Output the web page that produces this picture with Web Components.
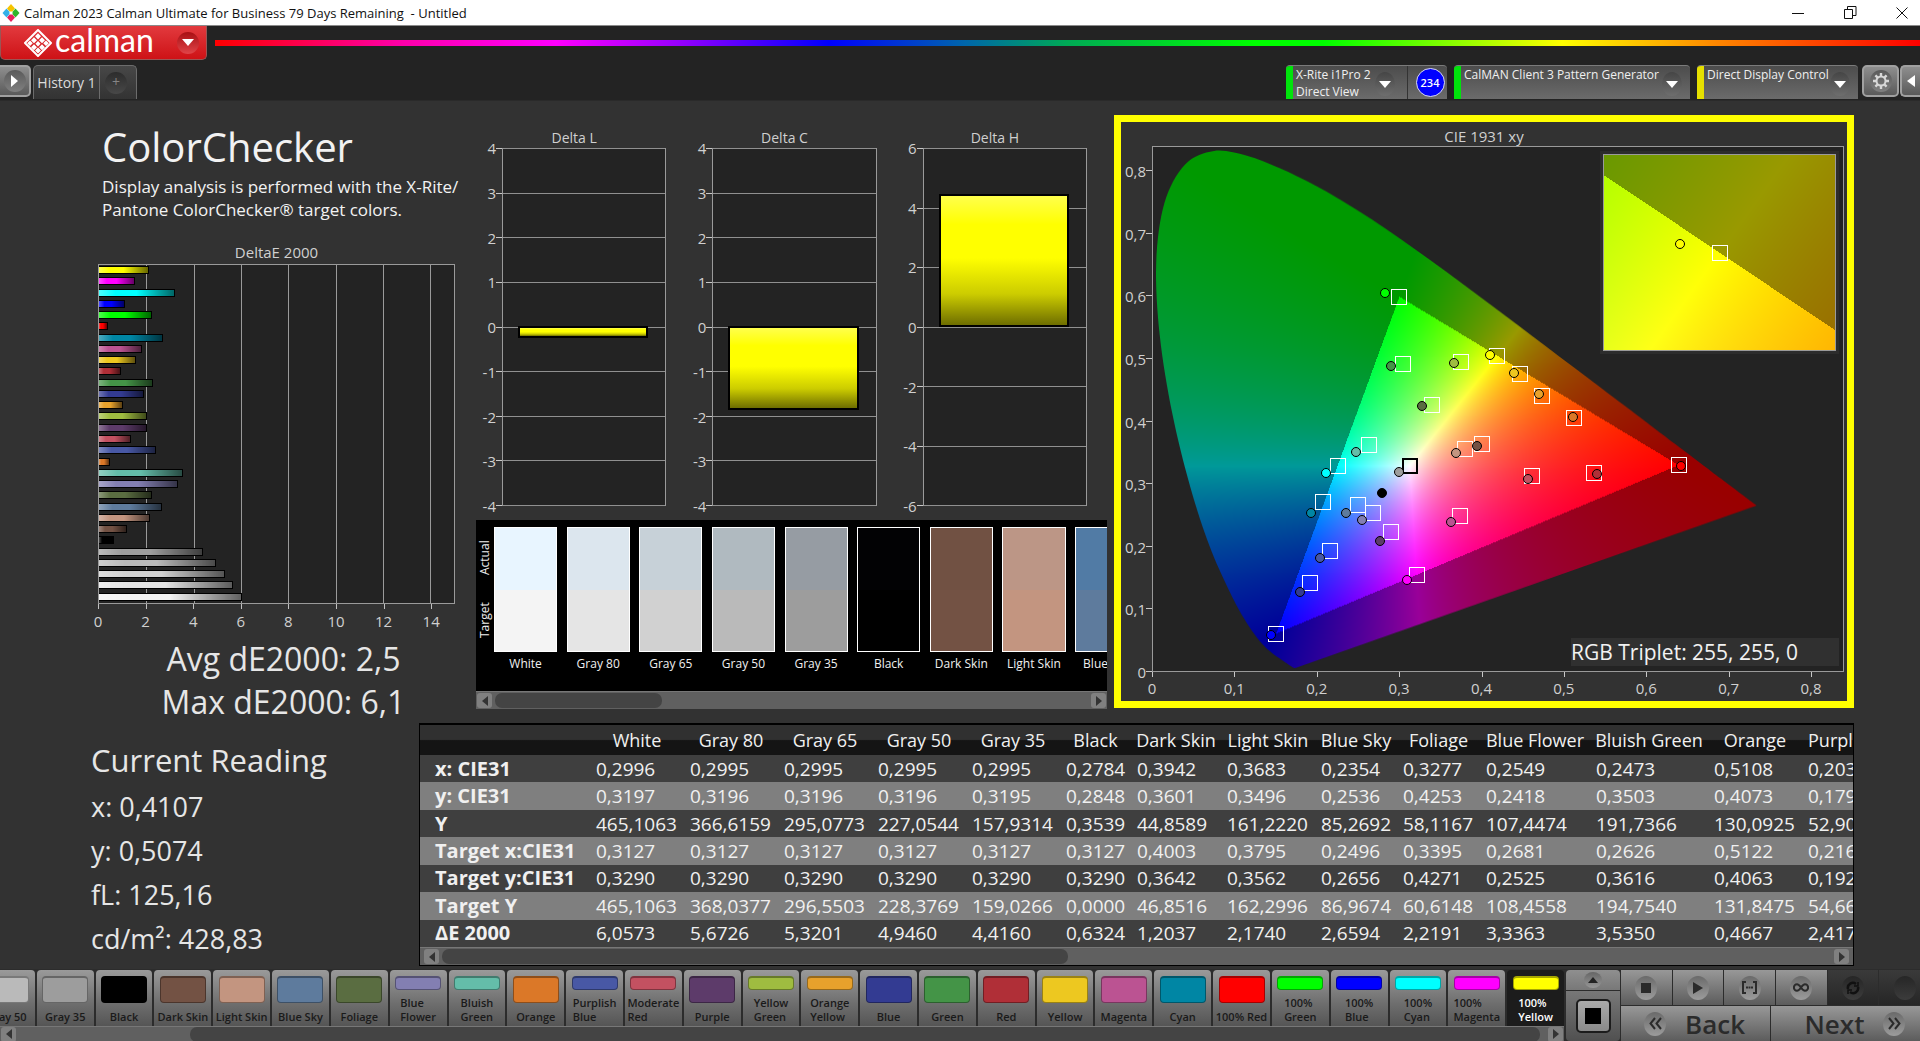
<!DOCTYPE html>
<html lang="en">
<head>
<meta charset="utf-8">
<title>Calman 2023</title>
<style>
  body { margin: 0; background: #323232; color: #e6e6e6; font-family: "Open Sans", "Noto Sans", sans-serif; font-size: 15px; }
</style>
</head>
<body>
<calman-app></calman-app>
<script>
const BASE = `:host,*{box-sizing:border-box} button{font:inherit;color:inherit;border:0;padding:0;margin:0;background:none}`;
function define(name, css, html, init) {
  customElements.define(name, class extends HTMLElement {
    connectedCallback() {
      if (this.shadowRoot) return;
      const root = this.attachShadow({ mode: 'open' });
      root.innerHTML = `<style>${BASE}${css}</style>` + (typeof html === 'function' ? html(this) : html);
      if (init) init(this, root);
    }
  });
}

const PATCHES = [
  ['White', '#f4f4f4', '#e8f5ff', 6.0573], ['Gray 80', '#e5e5e5', '#dce6ee', 5.6726], ['Gray 65', '#d1d1d1', '#c7d1d8', 5.3201],
  ['Gray 50', '#bababa', '#b0bac0', 4.946], ['Gray 35', '#9d9d9d', '#969ca3', 4.416], ['Black', '#000000', '#020204', 0.6324],
  ['Dark Skin', '#735244', '#715143', 1.2037], ['Light Skin', '#c39580', '#bc9686', 2.174], ['Blue Sky', '#5e7b9d', '#517ba5', 2.6594],
  ['Foliage', '#5a6d41', '#586e41', 2.2191], ['Blue\nFlower', '#837fb2', '', 3.3363], ['Bluish\nGreen', '#64bda9', '', 3.535],
  ['Orange', '#db7828', '', 0.4667], ['Purplish\nBlue', '#4858a5', '', 2.4175], ['Moderate\nRed', '#c35161', '', 1.35],
  ['Purple', '#5d3b6a', '', 2.03], ['Yellow\nGreen', '#9fbc40', '', 2.03], ['Orange\nYellow', '#e7a12c', '', 1.0],
  ['Blue', '#333b92', '', 1.9], ['Green', '#449447', '', 2.27], ['Red', '#b02f37', '', 0.95], ['Yellow', '#edc820', '', 1.55],
  ['Magenta', '#bb5392', '', 1.82], ['Cyan', '#0086a4', '', 2.7], ['100% Red', '#ff0000', '', 0.37], ['100%\nGreen', '#00ff00', '', 2.22],
  ['100%\nBlue', '#0000ff', '', 1.08], ['100%\nCyan', '#00ffff', '', 3.2], ['100%\nMagenta', '#ff00ff', '', 1.5], ['100%\nYellow', '#ffff00', '', 2.1]
];

/* ---------- window title ---------- */
define('title-bar', `
  :host{display:flex;align-items:center;height:26px;background:#fff;color:#111;font-size:13px;border-bottom:1px solid #8a8a8a;padding-left:2px}
  .t{flex:1;white-space:pre;padding-left:4px}
  .ctl{display:flex;gap:16px}
  button{width:36px;height:24px;display:grid;place-items:center}
  svg{display:block}
`, `
  <svg width="18" height="18" viewBox="0 0 18 18"><path fill="#f5c400" d="M9 0l4 4.500L9 9 5 4.500z"/><path fill="#35b0e8" d="M4.500 4.500l4 4.500-4 4.500L.5 9z"/><path fill="#2fb52a" d="M13.500 4.500l4 4.500-4 4.500-4-4.500z"/><path fill="#e8205c" d="M9 9l4 4.500L9 18l-4-4.500z"/><path fill="#fff" d="M9 7l2 2-2 2-2-2z"/></svg>
  <span class="t">Calman 2023 Calman Ultimate for Business 79 Days Remaining  - Untitled</span>
  <div class="ctl">
  <button aria-label="Minimize"><svg width="12" height="12"><path d="M0 6.500h12" stroke="#111"/></svg></button>
  <button aria-label="Restore"><svg width="13" height="13" fill="none" stroke="#111"><path d="M.5 3.500h8v9h-8zM3.500 3.500v-3h8.500v9H9"/></svg></button>
  <button aria-label="Close"><svg width="12" height="12"><path d="M.5.5l11 11M11.500.5l-11 11" stroke="#111"/></svg></button>
  </div>
`);

/* ---------- header ---------- */
define('device-tab', `
  :host{display:flex;height:34px;background:linear-gradient(#4c4c4c,#6b6b6b);border-radius:4px 4px 0 0;border-top:1px solid #7b7b7b;overflow:hidden;color:#f0f0f0;font-size:12px}
  .lamp{width:7px;background:var(--lamp)}
  .name{line-height:17px;padding-left:3px;flex:1;white-space:pre;text-align:left}
  button{display:flex;flex:1;min-width:0}
  .knob{width:20px;height:24px;flex:none;border-radius:50%;background:linear-gradient(#454545,#6e6e6e);display:grid;place-items:center;margin:6px 8px 0 0}
`, `<button aria-haspopup="menu"><i class="lamp"></i><span class="name"><slot></slot></span><span class="knob"><svg width="12" height="7"><path d="M0 0h12L6 7z" fill="#fff"/></svg></span></button><slot name="extra"></slot>`,
(el) => el.style.setProperty('--lamp', el.getAttribute('lamp')));

define('app-header', `
  :host{display:block;background:#232323;height:74px}
  .top{display:flex;align-items:flex-start;gap:8px}
  .brand{width:207px;height:34px;border:1px solid #9a5555;border-top:0;border-radius:0 0 5px 5px;background:linear-gradient(#e23a3e,#ce1216);display:flex;align-items:center;padding-left:22px;color:#fff}
  .brand b{font:400 32px/32px Lato,"Open Sans",sans-serif;padding:0 0 5px 2px;flex:1;text-align:left}
  .knob{width:22px;height:22px;border-radius:50%;background:linear-gradient(#a80f13,#e04448);display:grid;place-items:center;margin-right:7px}
  .rainbow{flex:1;height:6px;margin-top:14px;background:linear-gradient(90deg,#f00 0,#f0a 11%,#f0f 20%,#90f 27%,#00f 36%,#06a 44%,#0a5 50%,#0f0 61%,#0f0 65%,#ff0 79%,#f80 88%,#f00 100%)}
  .row{display:flex;align-items:flex-start;margin-top:5px}
  .sq{width:37px;height:32px;border:2px solid #a0a0a0;border-radius:5px;background:linear-gradient(#8e8e8e,#5a5a5a);display:grid;place-items:center;overflow:hidden}
  .sq.l{width:31px;border-left:0;border-radius:0 5px 5px 0}
  .sq.r{width:20px;border-right:0;border-radius:5px 0 0 5px;margin-left:1px}
  .disc{width:22px;height:22px;border-radius:50%;background:linear-gradient(#5a5a5a,#808080);display:grid;place-items:center}
  .tabs{display:flex;height:34px;margin-left:2px;border:1px solid #6c6c6c;border-bottom:0;border-radius:5px 5px 0 0;background:linear-gradient(#474747,#333);font-size:14px;color:#dcdcdc}
  .tabs button:first-child{width:66px;border-right:1px solid #6c6c6c}
  .tabs .plus{width:36px;display:grid;place-items:center}
  .plus span{width:22px;height:22px;border-radius:50%;background:linear-gradient(#2c2c2c,#484848);color:#858585;line-height:20px;margin-right:4px}
  .gap{flex:1}
  device-tab{margin-right:7px}
  .count{border-left:1px solid #333;display:grid;place-items:center;width:40px;padding-left:5px;margin-left:4px}
  .count span{width:29px;height:29px;border-radius:50%;background:#00f;border:1px solid #dde;display:grid;place-items:center;font-size:11px;font-weight:600;color:#fff}
`, `
  <div class="top">
    <button class="brand" aria-label="calman menu">
      <svg width="30" height="28" viewBox="0 0 30 28"><path d="M15 1L28 14 15 27 2 14z" fill="none" stroke="#fff" stroke-width="2" stroke-linejoin="round"/><g fill="#fff"><path d="M15 4.200l3 3.100-3 3.100-3-3.100zM11 8.200l3 3-3 3-3-3zM19 8.200l3 3-3 3-3-3zM7 11.500l2.800 2.800L7 17.100l-2.800-2.800zM15 12l2.600 2.700-2.600 2.700-2.600-2.700zM23 11.500l2.800 2.800-2.800 2.800-2.800-2.800zM11 15.200l3 3-3 3-3-3zM19 15.200l3 3-3 3-3-3zM15 18.500l3 3-3 3-3-3z"/></g></svg>
      <b>calman</b>
      <span class="knob"><svg width="12" height="7"><path d="M0 0h12L6 7z" fill="#fff"/></svg></span>
    </button>
    <div class="rainbow"></div>
  </div>
  <div class="row">
    <button class="sq l" aria-label="Expand"><span class="disc"><svg width="7" height="12"><path d="M0 0v12l7-6z" fill="#fff"/></svg></span></button>
    <div class="tabs"><button>History 1</button><button class="plus" aria-label="Add history"><span>+</span></button></div>
    <div class="gap"></div>
    <device-tab lamp="#00e40b" style="width:161px">X-Rite i1Pro 2
Direct View<div slot="extra" class="count"><span>234</span></div></device-tab>
    <device-tab lamp="#00e40b" style="width:236px">CalMAN Client 3 Pattern Generator</device-tab>
    <device-tab lamp="#e6e000" style="width:161px;margin-right:4px">Direct Display Control</device-tab>
    <button class="sq" aria-label="Settings"><span class="disc"><svg width="18" height="18" viewBox="-9 -9 18 18" stroke="#d8d8d8" fill="none"><circle r="4.500" stroke-width="2"/><path stroke-width="2.400" d="M0-5V-8M0 5V8M-5 0H-8M5 0H8M-3.600-3.600l-2-2M3.600 3.600l2 2M-3.600 3.600l-2 2M3.600-3.600l2-2"/></svg></span></button>
    <button class="sq r" aria-label="Collapse"><svg width="9" height="12"><path d="M8 0v12L0 6z" fill="#fff"/></svg></button>
  </div>
`);

/* ---------- scrollbar ---------- */
define('scroll-rail', `
  :host{display:flex;align-items:center;height:18px;background:#606060;border-top:1px solid #777;padding:0 1px}
  button{width:15px;height:15px;border-radius:3px;background:#808080;display:grid;place-items:center}
  .track{flex:1;display:grid;grid-template-columns:var(--cols);height:15px;padding:0 3px}
  .thumb{background:#444;border-radius:7px;grid-column:2}
`, `
  <button aria-label="Scroll left"><svg width="6" height="10"><path d="M6 0v10L0 5z" fill="#333"/></svg></button>
  <div class="track"><i class="thumb"></i></div>
  <button aria-label="Scroll right"><svg width="6" height="10"><path d="M0 0v10l6-5z" fill="#333"/></svg></button>
`, (el) => {
  const [a, b, c] = el.getAttribute('split').split(' ');
  el.style.setProperty('--cols', `minmax(0,${a}fr) minmax(0,${b}fr) minmax(0,${c}fr)`);
});

/* ---------- Delta L / C / H ---------- */
define('delta-chart', `
  :host{display:flex;flex-direction:column;flex:1;min-width:0;color:#d0d0d0}
  h3{font-size:14px;font-weight:400;line-height:20px;margin:0;text-align:center;padding-right:14px}
  .body{flex:1;display:flex;padding-right:20px}
  .labels{width:20px;margin:-10px 0;display:flex;flex-direction:column;justify-content:space-between;text-align:right;line-height:20px}
  .ticks{width:6px;display:flex;flex-direction:column;justify-content:space-between}
  .ticks i{height:1px;background:#c8c8c8}
  .plot{flex:1;display:grid;border:1px solid #9a9a9a;background:#232323}
  .grid,.bars{grid-area:1/1;margin:-1px 0}
  .grid{display:flex;flex-direction:column;justify-content:space-between}
  .grid i{height:1px;background:#909090}
  .bars{display:grid;grid-template-rows:var(--rows);padding:0 17px 0 15px}
  .bars i{grid-row:2;border:2px solid #000;margin-top:-1px;background:linear-gradient(#ffff4c,#ff0 22%,#ff0 48%,#cc0 76%,#6e6e00)}
`, (el) => {
  const max = +el.getAttribute('max'), step = +el.getAttribute('step'), n = 2 * max / step + 1;
  const ticks = Array.from({ length: n }, (_, k) => max - k * step);
  return `<h3>${el.getAttribute('name')}</h3><div class="body">
    <div class="labels">${ticks.map(t => `<span>${t}</span>`).join('')}</div>
    <div class="ticks">${'<i></i>'.repeat(n)}</div>
    <div class="plot"><div class="grid">${'<i></i>'.repeat(n)}</div><div class="bars"><i></i></div></div></div>`;
}, (el) => {
  const max = +el.getAttribute('max'), v = +el.getAttribute('value');
  const top = max - Math.max(v, 0), h = Math.abs(v), bot = 2 * max - top - h;
  el.style.setProperty('--rows', `minmax(0,${top * 100}fr) minmax(0,${h * 100}fr) minmax(0,${bot * 100}fr)`);
});

/* ---------- DeltaE 2000 ---------- */
define('delta-e-chart', `
  :host{display:block;color:#d0d0d0}
  h3{font-size:15px;font-weight:400;line-height:23px;margin:0;text-align:center}
  .plot{display:grid;height:340px;border:1px solid #9a9a9a;background:#232323}
  .grid,.bars{grid-area:1/1}
  .grid,.axis{display:grid;grid-template-columns:repeat(7,minmax(0,2fr)) minmax(0,1fr)}
  .grid i+i{border-left:1px solid #9a9a9a}
  .bars{display:flex;flex-direction:column;justify-content:space-between;padding:1px 0 2px}
  .bars i{height:8px;border:1px solid #000;border-left:0}
  .axis i{height:5px;border-left:1px solid #c0c0c0}
  .axis span{width:40px;margin-left:-20px;text-align:center;line-height:20px;padding-top:2px}
`, () => `<h3>DeltaE 2000</h3>
  <div class="plot"><div class="grid">${'<i></i>'.repeat(8)}</div><div class="bars">${[...PATCHES].reverse().map(([, c, , v]) =>
    `<i style="width:${(v / 15 * 100).toFixed(1)}%;background:linear-gradient(90deg,rgba(255,255,255,.3),transparent 22%,transparent 50%,rgba(0,0,0,.6)),${c}"></i>`).join('')}</div></div>
  <div class="axis">${'<i></i>'.repeat(8)}</div>
  <div class="axis">${[0, 2, 4, 6, 8, 10, 12, 14].map(t => `<span>${t}</span>`).join('')}</div>`);

/* ---------- CIE 1931 chart ---------- */
const LOCUS = [[.1741,.005],[.1714,.0051],[.1644,.0109],[.1566,.0177],[.144,.0297],[.1355,.0399],[.1241,.0578],[.1096,.0868],[.0913,.1327],[.0687,.2007],[.0454,.295],[.0235,.4127],[.0082,.5384],[.0039,.6548],[.0139,.7502],[.0389,.812],[.0743,.8338],[.1142,.8262],[.1547,.8059],[.1929,.7816],[.2296,.7543],[.2658,.7243],[.3016,.6923],[.3373,.6589],[.3731,.6245],[.4087,.5896],[.4441,.5547],[.4788,.5202],[.5125,.4866],[.5448,.4544],[.5752,.4242],[.6029,.3965],[.627,.3725],[.6658,.334],[.6915,.3083],[.719,.2809],[.7347,.2653]];
const READINGS = [ // target x, y, actual x, y, colour
  [.64,.33,.6428,.3286,'#ff0000'],[.3,.6,.2825,.6058,'#00ff00'],[.4193,.5053,.4107,.5074,'#ffff00'],[.3209,.1542,.309,.146,'#ff00ff'],
  [.15,.06,.1435,.057,'#0000ff'],[.2246,.3287,.211,.318,'#00ffff'],[.3043,.4923,.29,.489,'#449447'],[.3753,.4948,.366,.494,'#9fbc40'],
  [.4733,.4415,.47,.444,'#e7a12c'],[.4474,.4764,.44,.478,'#edc820'],[.5122,.4063,.5108,.4073,'#db7828'],[.5374,.3176,.5406,.3158,'#b02f37'],
  [.4615,.3133,.456,.3084,'#c35161'],[.3733,.2483,.3623,.239,'#bb5392'],[.2902,.2226,.276,.2085,'#5d3b6a'],[.216,.1925,.2034,.1809,'#4858a5'],
  [.1913,.141,.1787,.1269,'#333b92'],[.2075,.271,.1929,.2526,'#0086a4'],[.2626,.3616,.2473,.3503,'#64bda9'],[.2681,.2525,.2549,.2418,'#837fb2'],
  [.3395,.4271,.3277,.4253,'#5a6d41'],[.2496,.2656,.2354,.2536,'#5e7b9d'],[.3795,.3562,.3683,.3496,'#c39580'],[.4003,.3642,.3942,.3601,'#735244'],
  [.3127,.329,.2996,.3197,'#9d9d9d','#000'],[0,0,.2784,.2848,'#000000']];

function paintGamut(canvas, x0, y0, range, clip) {
  const w = canvas.width = canvas.clientWidth, h = canvas.height = canvas.clientHeight;
  const src = document.createElement('canvas'); src.width = w; src.height = h;
  const g = src.getContext('2d'), img = g.createImageData(w, h), d = img.data;
  const side = (x, y, a, b) => (b[0] - a[0]) * (y - a[1]) - (b[1] - a[1]) * (x - a[0]);
  const R = [.64, .33], G = [.3, .6], B = [.15, .06];
  for (let j = 0; j < h; j++) for (let i = 0; i < w; i++) {
    const x = x0 + (i + .5) / w * range, y = y0 + (1 - (j + .5) / h) * range, z = 1 - x - y;
    let r = Math.max(0, 3.2406 * x - 1.5372 * y - .4986 * z), gr = Math.max(0, -.9689 * x + 1.8758 * y + .0415 * z), b = Math.max(0, .0557 * x - .204 * y + 1.057 * z);
    const m = Math.max(r, gr, b) || 1;
    const inside = side(x, y, R, G) >= 0 && side(x, y, G, B) >= 0 && side(x, y, B, R) >= 0;
    const k = (inside ? 255 : 153) / m, o = (j * w + i) * 4;
    d[o] = r * k; d[o + 1] = gr * k; d[o + 2] = b * k; d[o + 3] = 255;
  }
  g.putImageData(img, 0, 0);
  const c = canvas.getContext('2d');
  if (clip) {
    const P = LOCUS.map(([x, y]) => [(x - x0) / range * w, (1 - (y - y0) / range) * h]);
    c.beginPath(); c.moveTo(...P[0]);
    for (let i = 0; i < P.length - 1; i++) {
      const a = P[Math.max(i - 1, 0)], p = P[i], q = P[i + 1], e = P[Math.min(i + 2, P.length - 1)];
      c.bezierCurveTo(p[0] + (q[0] - a[0]) / 6, p[1] + (q[1] - a[1]) / 6, q[0] - (e[0] - p[0]) / 6, q[1] - (e[1] - p[1]) / 6, q[0], q[1]);
    }
    c.closePath(); c.clip();
  }
  c.drawImage(src, 0, 0);
}
const marks = (list, x0, y0, range) => {
  const at = (x, y) => `left:${((x - x0) / range * 100).toFixed(2)}%;top:${((1 - (y - y0) / range) * 100).toFixed(2)}%`;
  return list.map(([tx, ty, , , , s]) => tx ? `<i class="sq" style="${at(tx, ty)};${s ? `border:2px solid ${s}` : ''}"></i>` : '').join('') +
    list.map(([, , x, y, c]) => `<i class="dot" style="${at(x, y)};background:${c}"></i>`).join('');
};
define('cie-chart', `
  :host{display:flex;flex-direction:column;border:7px solid #ff0;color:#d0d0d0;padding-right:3px}
  h3{font-size:15px;font-weight:400;line-height:20px;margin:0;padding:4px 0 0 3px;text-align:center}
  .body{flex:1;display:flex}
  .ylab,.ytick{display:grid;grid-template-rows:minmax(0,2fr) repeat(8,minmax(0,5fr))}
  .ylab{width:25px;text-align:right;line-height:20px}
  .ylab span{align-self:end;margin-bottom:-10px}
  .ytick{width:6px}
  .ytick i{border-bottom:1px solid #c8c8c8}
  .plot{flex:1;position:relative;border:1px solid #9a9a9a;background:#232323}
  canvas{position:absolute;inset:0;width:100%;height:100%}
  .inset{position:absolute;right:7px;top:7px;width:233px;height:197px;border:1px solid #9a9a9a;outline:3px solid #2c2c2c}
  .trip{position:absolute;right:4px;bottom:5px;width:268px;height:28px;line-height:28px;background:#303030;font-size:21px;color:#f2f2f2}
  .sq{position:absolute;width:16px;height:16px;margin:-8px;border:1px solid #fff}
  .dot{position:absolute;width:10px;height:10px;margin:-5px;border:1px solid #000;border-radius:50%}
  .xt,.xl{display:grid;grid-template-columns:repeat(8,minmax(0,5fr)) minmax(0,2fr);margin-left:31px}
  .xt i{height:5px;border-left:1px solid #c8c8c8}
  .xl{line-height:20px;padding:1px 0 3px}
  .xl span{width:40px;margin-left:-20px;text-align:center}
`, () => {
  const lab = k => k ? '0,' + k : '0';
  return `<h3>CIE 1931 xy</h3><div class="body">
    <div class="ylab">${[8, 7, 6, 5, 4, 3, 2, 1, 0].map(k => `<span>${lab(k)}</span>`).join('')}</div>
    <div class="ytick">${'<i></i>'.repeat(9)}</div>
    <div class="plot"><canvas class="main"></canvas>${marks(READINGS, 0, 0, .84)}
      <div class="inset"><canvas class="zoom"></canvas>${marks([READINGS[2]], .3943, .4803, .05)}</div>
      <div class="trip">RGB Triplet: 255, 255, 0</div></div></div>
    <div class="xt">${'<i></i>'.repeat(9)}</div>
    <div class="xl">${[0, 1, 2, 3, 4, 5, 6, 7, 8].map(k => `<span>${lab(k)}</span>`).join('')}</div>`;
}, (el, root) => {
  const draw = () => {
    paintGamut(root.querySelector('.main'), 0, 0, .84, true);
    paintGamut(root.querySelector('.zoom'), .3943, .4803, .05, false);
  };
  draw();
  addEventListener('resize', draw);
});

/* ---------- actual / target swatches ---------- */
define('swatch-strip', `
  :host{display:block;background:#000;color:#f0f0f0;font-size:12px}
  .row{display:flex;height:171px;padding-top:7px;overflow:hidden}
  .side{width:18px;flex:none;height:125px;display:flex;justify-content:space-around;writing-mode:vertical-rl;transform:rotate(180deg);line-height:18px}
  .list{flex:1;min-width:0;display:grid;grid-auto-flow:column;grid-auto-columns:10.3%;column-gap:1.55%}
  figure{margin:0}
  .chip{height:125px;border:1px solid #fff;display:flex;flex-direction:column}
  .chip i{flex:1}
  figcaption{text-align:center;white-space:nowrap;line-height:24px}
`, () => `<div class="row"><div class="side"><span>Target</span><span>Actual</span></div><div class="list">${PATCHES.slice(0, 9).map(([n, t, a]) =>
  `<figure><div class="chip"><i style="background:${a}"></i><i style="background:${t}"></i></div><figcaption>${n}</figcaption></figure>`).join('')}</div></div>
  <scroll-rail split="0 169 431"></scroll-rail>`);

/* ---------- readings table ---------- */
const COLS = [['White', 94], ['Gray 80', 94], ['Gray 65', 94], ['Gray 50', 94], ['Gray 35', 94], ['Black', 71], ['Dark Skin', 90], ['Light Skin', 94], ['Blue Sky', 82], ['Foliage', 83], ['Blue Flower', 110], ['Bluish Green', 118], ['Orange', 94], ['Purplish Blue', 123]];
const ROWS = [
  ['x: CIE31', '0,2996 0,2995 0,2995 0,2995 0,2995 0,2784 0,3942 0,3683 0,2354 0,3277 0,2549 0,2473 0,5108 0,2034'],
  ['y: CIE31', '0,3197 0,3196 0,3196 0,3196 0,3195 0,2848 0,3601 0,3496 0,2536 0,4253 0,2418 0,3503 0,4073 0,1798'],
  ['Y', '465,1063 366,6159 295,0773 227,0544 157,9314 0,3539 44,8589 161,2220 85,2692 58,1167 107,4474 191,7366 130,0925 52,9034'],
  ['Target x:CIE31', '0,3127 0,3127 0,3127 0,3127 0,3127 0,3127 0,4003 0,3795 0,2496 0,3395 0,2681 0,2626 0,5122 0,2162'],
  ['Target y:CIE31', '0,3290 0,3290 0,3290 0,3290 0,3290 0,3290 0,3642 0,3562 0,2656 0,4271 0,2525 0,3616 0,4063 0,1921'],
  ['Target Y', '465,1063 368,0377 296,5503 228,3769 159,0266 0,0000 46,8516 162,2996 86,9674 60,6148 108,4558 194,7540 131,8475 54,6621'],
  ['ΔE 2000', '6,0573 5,6726 5,3201 4,9460 4,4160 0,6324 1,2037 2,1740 2,6594 2,2191 3,3363 3,5350 0,4667 2,4175']];
define('readings-table', `
  :host{display:block;border:1px solid #000;border-top-width:2px;overflow:hidden}
  .clip{overflow:hidden}
  table{border-collapse:collapse;table-layout:fixed;width:1505px;height:222px;font-size:19px;color:#f0f0f0}
  th,td{padding:0 0 0 6px;text-align:left;white-space:nowrap;line-height:26px}
  thead tr{height:30px;background:linear-gradient(#303030 48%,#141414 52%)}
  thead th{font-weight:400;font-size:18px;text-align:center;padding:0}
  tbody tr{background:#3f3f3f}
  tbody tr:nth-child(even){background:#7f7f7f}
  tbody th{padding-left:15px;font-size:20px;font-weight:700}
  scroll-rail{padding:0 4px}
`, () => `<div class="clip"><table><colgroup><col style="width:170px">${COLS.map(c => `<col style="width:${c[1]}px">`).join('')}</colgroup>
  <thead><tr><td></td>${COLS.map(c => `<th scope="col">${c[0]}</th>`).join('')}</tr></thead>
  <tbody>${ROWS.map(([h, v]) => `<tr><th scope="row">${h}</th>${v.split(' ').map(t => `<td>${t}</td>`).join('')}</tr>`).join('')}</tbody></table></div>
  <scroll-rail split="0 628 765"></scroll-rail>`);

/* ---------- bottom bar ---------- */
define('patch-bar', `
  :host{display:block;min-width:0;overflow:hidden}
  .list{display:grid;grid-template-columns:repeat(27,minmax(0,1fr));gap:2px;margin-left:-22px}
  button{height:56px;border-radius:4px 4px 0 0;background:linear-gradient(#9a9a9a,#6e6e6e 60%,#555);display:flex;flex-direction:column;align-items:center;justify-content:space-between;padding-top:6px;color:#1a1a1a;font-size:11px;font-weight:600;line-height:14px;white-space:pre;text-align:left;overflow:hidden}
  button i{width:46px;height:27px;border-radius:4px;border:1px solid rgba(0,0,0,.35);border-top-width:2px}
  button.two i{height:14px}
  button span{padding-bottom:2px}
  button.on{background:#1c1c1c;color:#fff}
  scroll-rail{height:15px}
`, () => `<div class="list">${PATCHES.slice(3).map(([n, c], k) => `<button class="${n.includes('\n') ? 'two' : ''}${k === 26 ? ' on' : ''}"><i style="background:${c}"></i><span>${n}</span></button>`).join('')}</div>
  <scroll-rail split="173 1367 5"></scroll-rail>`);

define('transport-pad', `
  :host{display:flex;gap:1px}
  .side{width:54px;display:flex;flex-direction:column;gap:1px}
  .side button{background:linear-gradient(#8f8f8f,#787878);border-radius:4px 4px 0 0;display:grid;place-items:center}
  .side .up{height:20px}.side .stop{flex:1;background:linear-gradient(#787878,#505050);border-radius:0 0 4px 4px}
  .up span{width:18px;height:16px;border-radius:50%;background:linear-gradient(#666,#969696);display:grid;place-items:center}
  .frame{width:35px;height:34px;border:2px solid #1c1c1c;border-radius:5px;background:linear-gradient(#aaa,#8a8a8a);display:grid;place-items:center}
  .frame i{width:16px;height:16px;background:#000}
  .pad{width:299px;overflow:hidden;display:flex;flex-direction:column;gap:1px}
  .row{display:flex;flex:1;gap:1px;margin-right:-10px}
  .row button{flex:1;background:linear-gradient(#989898,#5c5c5c);display:flex;align-items:center;justify-content:center}
  .row .off{background:linear-gradient(#3a3a3a,#262626)}
  .disc{width:22px;height:24px;border-radius:50%;background:linear-gradient(#6a6a6a,#9c9c9c);display:grid;place-items:center}
  .off .disc{background:linear-gradient(#262626,#3c3c3c)}
  .big button{font-size:26px;line-height:34px;font-weight:600;color:#2b2b2b;gap:19px;justify-content:flex-start;padding-left:23px}
  .big button+button{padding-left:34px}
`, `
  <div class="side"><button class="up" aria-label="Show more"><span><svg width="10" height="6"><path d="M5 0l5 6H0z" fill="#222"/></svg></span></button><button class="stop" aria-label="Pattern window"><span class="frame"><i></i></span></button></div>
  <div class="pad">
    <div class="row small">
      <button aria-label="Stop"><span class="disc"><svg width="10" height="10"><path d="M0 0h10v10H0z" fill="#2b2b2b"/></svg></span></button>
      <button aria-label="Play"><span class="disc"><svg width="10" height="12"><path d="M0 0l10 6-10 6z" fill="#2b2b2b"/></svg></span></button>
      <button aria-label="Read series"><span class="disc"><svg width="15" height="13" fill="none" stroke="#2b2b2b" stroke-width="2"><path d="M4 1H1v11h3M11 1h3v11h-3M4 6.500h2M6.500 6.500h2M9 6.500h2"/></svg></span></button>
      <button aria-label="Continuous"><span class="disc"><svg width="16" height="9" fill="none" stroke="#2b2b2b" stroke-width="2"><path d="M8 4.500C6 1.500 5.500 1.200 4 1.200a3 3.200 0 0 0 0 6.600C5.500 7.800 6 7.500 8 4.500S10.500 1.200 12 1.200a3 3.200 0 0 1 0 6.600C10.500 7.800 10 7.500 8 4.500z"/></svg></span></button>
      <button class="off" aria-label="Refresh"><span class="disc"><svg width="14" height="14" fill="none" stroke="#111" stroke-width="2.500"><path d="M2 8a5 5 0 0 1 8-5M12 6a5 5 0 0 1-8 5"/><path d="M8 5h4V1M6 9H2v4" stroke-width="1.500"/></svg></span></button>
      <button class="off" aria-label="Unused"><span class="disc"></span></button>
    </div>
    <div class="row big">
      <button><span class="disc"><svg width="13" height="13" fill="none" stroke="#2b2b2b" stroke-width="2"><path d="M6 1L1.500 6.500 6 12M12 1L7.500 6.500 12 12"/></svg></span>Back</button>
      <button>Next<span class="disc"><svg width="13" height="13" fill="none" stroke="#2b2b2b" stroke-width="2"><path d="M1 1l4.500 5.500L1 12M7 1l4.500 5.500L7 12"/></svg></span></button>
    </div>
  </div>
`);

/* ---------- page ---------- */
define('calman-app', `
  :host{display:flex;flex-direction:column;min-height:100vh}
  main{flex:1;display:grid;grid-template-columns:419px 57px minmax(0,631fr) minmax(0,747fr);grid-template-rows:1fr auto;padding:0 66px 3px 0;border-top:1px solid #2a2a2a}
  .intro{grid-area:1/1/2/3;padding:19px 21px 0 98px;display:flex;flex-direction:column}
  h1{font-size:40px;line-height:54px;font-weight:400;margin:0 0 1px 4px;color:#f2f2f2}
  .intro p{font-size:17px;line-height:23px;margin:0 0 20px 4px;white-space:nowrap;color:#f2f2f2}
  .avg{font-size:32px;line-height:43px;text-align:center;padding:6px 0 0 14px}
  .mid{grid-area:1/3;padding:27px 0 14px;display:flex;flex-direction:column}
  .charts{flex:1;display:flex;margin-bottom:14px}
  cie-chart{grid-area:1/4;margin:14px 0 15px 7px}
  .now{grid-area:2/1;padding:15px 0 0 91px}
  h2{font-size:31px;line-height:44px;font-weight:400;margin:0 0 3px}
  .now div{font-size:27px;line-height:44px}
  readings-table{grid-area:2/2/3/5}
  footer{display:flex;height:72px;gap:2px;background:#2c2c2c;padding-top:1px}
  patch-bar{flex:1}
`, `
  <title-bar></title-bar>
  <app-header></app-header>
  <main>
    <section class="intro">
      <h1>ColorChecker</h1>
      <p>Display analysis is performed with the X-Rite/<br>Pantone ColorChecker® target colors.</p>
      <delta-e-chart></delta-e-chart>
      <div class="avg">Avg dE2000: 2,5<br>Max dE2000: 6,1</div>
    </section>
    <section class="mid">
      <div class="charts">
        <delta-chart name="Delta L" max="4" step="1" value="-0.24"></delta-chart>
        <delta-chart name="Delta C" max="4" step="1" value="-1.86"></delta-chart>
        <delta-chart name="Delta H" max="6" step="2" value="4.43"></delta-chart>
      </div>
      <swatch-strip></swatch-strip>
    </section>
    <cie-chart></cie-chart>
    <section class="now">
      <h2>Current Reading</h2>
      <div>x: 0,4107</div><div>y: 0,5074</div><div>fL: 125,16</div><div>cd/m²: 428,83</div>
    </section>
    <readings-table></readings-table>
  </main>
  <footer><patch-bar></patch-bar><transport-pad></transport-pad></footer>
`);
</script>
</body>
</html>
